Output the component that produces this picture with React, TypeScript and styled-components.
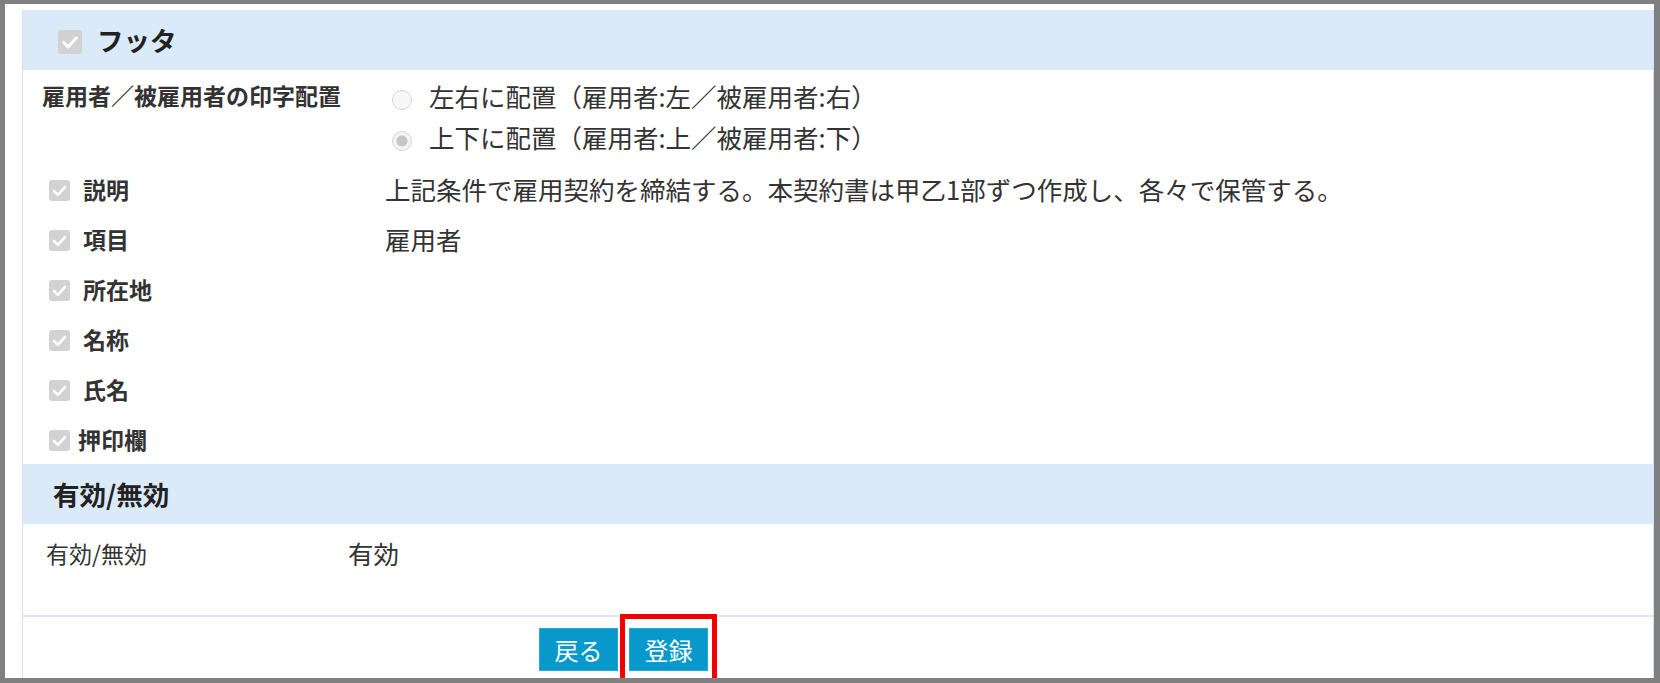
import styled, { createGlobalStyle } from 'styled-components';

const GlobalStyle = createGlobalStyle`
  html, body {
    margin: 0;
    padding: 0;
    background: #808080;
  }
  body {
    font-family: "Noto Sans CJK JP", "Noto Sans", sans-serif;
    color: #333;
  }
`;

const checkRows = [
  { label: '説明', value: '上記条件で雇用契約を締結する。本契約書は甲乙1部ずつ作成し、各々で保管する。' },
  { label: '項目', value: '雇用者' },
  { label: '所在地', value: '' },
  { label: '名称', value: '' },
  { label: '氏名', value: '' },
  { label: '押印欄', value: '', tight: true },
];

const CheckMark = ({ size }: { size: number }) => (
  <CheckBox $size={size}>
    <svg width={size} height={size} viewBox="0 0 21 21">
      <path d="M5 11 l3.8 3.8 L16 7" fill="none" stroke="#fff" strokeWidth="2.6" strokeLinecap="round" strokeLinejoin="round" />
    </svg>
  </CheckBox>
);

const App = () => {
  return (
    <>
      <GlobalStyle />
      <Frame>
        <Panel>
          <SectionHeader $pad={35}>
            <CheckMark size={24} />
            <SectionTitle>フッタ</SectionTitle>
          </SectionHeader>

          <RadioSection>
            <Label>雇用者／被雇用者の印字配置</Label>
            <RadioList>
              <RadioOption>
                <Radio />
                <Value>左右に配置（雇用者:左／被雇用者:右）</Value>
              </RadioOption>
              <RadioOption>
                <Radio $checked />
                <Value>上下に配置（雇用者:上／被雇用者:下）</Value>
              </RadioOption>
            </RadioList>
          </RadioSection>

          {checkRows.map((row) => (
            <CheckRow key={row.label}>
              <CheckMark size={21} />
              <Label $shift={row.tight ? -5 : 0}>{row.label}</Label>
              <Value>{row.value}</Value>
            </CheckRow>
          ))}

          <SectionHeader $pad={30}>
            <SectionTitle>有効/無効</SectionTitle>
          </SectionHeader>

          <StatusRow>
            <Label $light>有効/無効</Label>
            <Value>有効</Value>
          </StatusRow>

          <Footer>
            <Button>戻る</Button>
            <Highlight>
              <Button>登録</Button>
            </Highlight>
          </Footer>
        </Panel>
      </Frame>
    </>
  );
};

export default App;

const Frame = styled.div`
  box-sizing: border-box;
  margin: 4px 0 0 5px;
  width: 1649px;
  height: 674px;
  padding: 6px 0 0 17px;
  background: #fff;
  overflow: hidden;
`;

const Panel = styled.div`
  width: 1632px;
  min-height: 700px;
  box-sizing: border-box;
  border-left: 1px solid #d3e3f6;
  border-right: 1px solid #d3e3f6;
`;

const SectionHeader = styled.div<{ $pad: number }>`
  height: 60px;
  display: flex;
  align-items: center;
  gap: 15px;
  padding-left: ${(p) => p.$pad}px;
  background: #dbeaf9;
`;

const SectionTitle = styled.div`
  font-size: 26.5px;
  font-weight: 700;
  color: #222;
  line-height: 1;
`;

const CheckBox = styled.span<{ $size: number }>`
  display: inline-flex;
  flex: none;
  width: ${(p) => p.$size}px;
  height: ${(p) => p.$size}px;
  border-radius: 3px;
  background: #d2d2d2;
  margin-top: 3px;
`;

const RadioSection = styled.div`
  display: grid;
  grid-template-columns: 350px 1fr;
  padding: 5px 0 7px 19px;
`;

const Label = styled.div<{ $shift?: number; $light?: boolean }>`
  font-size: 23px;
  font-weight: ${(p) => (p.$light ? 400 : 700)};
  color: #333;
  line-height: 40px;
  margin-left: ${(p) => p.$shift ?? 0}px;
  white-space: nowrap;
`;

const RadioList = styled.div`
  display: flex;
  flex-direction: column;
`;

const RadioOption = styled.div`
  height: 41px;
  display: flex;
  align-items: center;
  gap: 17px;
`;

const Radio = styled.span<{ $checked?: boolean }>`
  flex: none;
  width: 18px;
  height: 18px;
  margin-top: 8px;
  border-radius: 50%;
  border: 1px solid #d4d4d4;
  background: ${(p) => (p.$checked ? 'radial-gradient(circle, #c6c6c6 0 5px, #f4f4f4 6px)' : '#f7f7f7')};
`;

const Value = styled.div`
  font-size: 25.5px;
  color: #333;
  line-height: 40px;
  white-space: nowrap;
`;

const CheckRow = styled.div`
  height: 50px;
  display: grid;
  grid-template-columns: 21px 289px 1fr;
  column-gap: 13px;
  align-items: center;
  padding-left: 26px;
`;

const StatusRow = styled.div`
  box-sizing: border-box;
  height: 93px;
  display: grid;
  grid-template-columns: 302px 1fr;
  align-items: start;
  padding: 9px 0 0 23px;
  border-bottom: 2px solid #dce9f8;
`;

const Footer = styled.div`
  display: flex;
  gap: 11px;
  padding: 11px 0 0 516px;
`;

const Highlight = styled.div`
  position: relative;

  &::after {
    content: '';
    position: absolute;
    top: -14px;
    left: -9px;
    right: -9px;
    bottom: -12px;
    border: 5px solid #f20000;
    pointer-events: none;
  }
`;

const Button = styled.button`
  width: 79px;
  height: 43px;
  padding: 0;
  border: 1px solid #2aa6d4;
  background: #0899cc;
  color: #fff;
  font-family: "Noto Sans CJK JP", "Noto Sans", sans-serif;
  font-size: 24px;
  line-height: 1;
  cursor: pointer;
`;
